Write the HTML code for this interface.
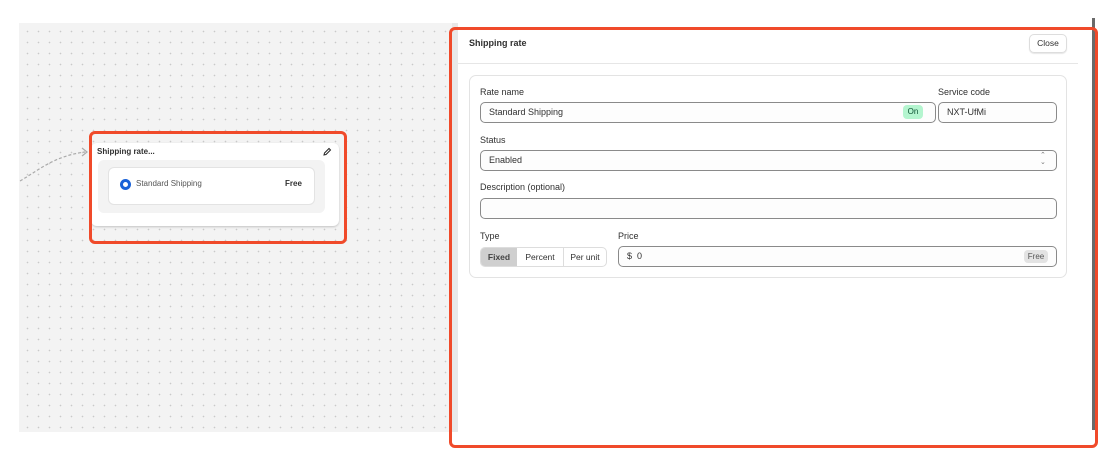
<!DOCTYPE html><html><head><style>
body{margin:0;width:1118px;height:468px;background:#fff;position:relative;overflow:hidden;font-family:"Liberation Sans",sans-serif;color:#303030}
.a{position:absolute;box-sizing:border-box}
.canvas{left:19px;top:23px;width:440px;height:409px;background-color:#f3f3f3;background-image:radial-gradient(#c9c9c9 0.7px,transparent 0.9px);background-size:11px 11px;background-position:3px 3px}
.lbl{font-size:9px;color:#303030}
.inp{border:1px solid #8a8a8a;border-radius:5px;background:#fdfdfd;font-size:9px;padding-left:8px;line-height:18px}
.red{border:3px solid #f04a2a;border-radius:6px}
</style></head><body>
<div class="a canvas"></div>
<svg class="a" style="left:19px;top:140px" width="75" height="50"><path d="M1 41 C20 30,35 16,66 12" stroke="#aaa" stroke-width="1.2" fill="none" stroke-dasharray="3 2"/><path d="M63 8 L68 12 L63 16" stroke="#aaa" stroke-width="1.2" fill="none"/></svg>
<div class="a" style="left:91px;top:143px;width:248px;height:83px;background:#fff;border-radius:6px;box-shadow:0 1px 2px rgba(0,0,0,.2)"></div>
<div class="a" style="left:97px;top:147px;font-size:8px;font-weight:bold">Shipping rate...</div>
<svg class="a" style="left:322px;top:147px" width="10" height="10"><path d="M2 8 L2.5 6 L7 1.5 L8.5 3 L4 7.5 Z" stroke="#222" stroke-width="1" fill="none"/></svg>
<div class="a" style="left:98px;top:160px;width:227px;height:53px;background:#f3f3f3;border-radius:6px"></div>
<div class="a" style="left:108px;top:167px;width:207px;height:38px;background:#fff;border-radius:6px;border:1px solid #e3e3e3"></div>
<div class="a" style="left:120px;top:179px;width:11px;height:11px;border-radius:50%;border:3px solid #1a62d8"></div>
<div class="a" style="left:136px;top:179px;font-size:8px;color:#555">Standard Shipping</div>
<div class="a" style="left:285px;top:179px;font-size:8px;font-weight:bold">Free</div>
<div class="a red" style="left:89px;top:131px;width:258px;height:113px"></div>

<div class="a" style="left:452px;top:23px;width:6px;height:409px;background:#e8e8e8"></div>
<div class="a" style="left:458px;top:23px;width:635px;height:409px;background:#fff"></div>
<div class="a" style="left:1092px;top:18px;width:3px;height:412px;background:#6a6a6a"></div>
<div class="a" style="left:469px;top:38px;font-size:9px;font-weight:bold">Shipping rate</div>
<div class="a" style="left:1029px;top:34px;width:38px;height:19px;border:1px solid #ddd;border-radius:5px;font-size:8.5px;text-align:center;line-height:17px;box-shadow:0 1px 1px rgba(0,0,0,.1)">Close</div>
<div class="a" style="left:458px;top:63px;width:620px;height:1px;background:#e6e6e6"></div>
<div class="a" style="left:469px;top:75px;width:598px;height:203px;border:1px solid #e3e3e3;border-radius:7px"></div>
<div class="a lbl" style="left:480px;top:87px">Rate name</div>
<div class="a lbl" style="left:938px;top:87px">Service code</div>
<div class="a inp" style="left:480px;top:102px;width:456px;height:21px">Standard Shipping</div>
<div class="a" style="left:903px;top:105px;width:20px;height:14px;background:#b4f5cf;border-radius:4px;font-size:8px;color:#0c5132;text-align:center;line-height:14px">On</div>
<div class="a inp" style="left:938px;top:102px;width:119px;height:21px">NXT-UfMi</div>
<div class="a lbl" style="left:480px;top:135px">Status</div>
<div class="a inp" style="left:480px;top:150px;width:577px;height:21px">Enabled</div>
<div class="a" style="left:1040px;top:152px;font-size:7px;color:#777;line-height:7px">⌃<br>⌄</div>
<div class="a lbl" style="left:480px;top:182px">Description (optional)</div>
<div class="a inp" style="left:480px;top:198px;width:577px;height:21px"></div>
<div class="a lbl" style="left:480px;top:231px">Type</div>
<div class="a lbl" style="left:618px;top:231px">Price</div>
<div class="a" style="left:480px;top:247px;width:127px;height:20px;border:1px solid #ddd;border-radius:5px;overflow:hidden;font-size:8.5px;display:flex">
<div style="width:36px;background:#cfcfcf;text-align:center;line-height:18px;font-weight:bold;color:#444">Fixed</div>
<div style="width:46px;text-align:center;line-height:18px;border-right:1px solid #ddd">Percent</div>
<div style="flex:1;text-align:center;line-height:18px">Per unit</div></div>
<div class="a inp" style="left:618px;top:246px;width:439px;height:21px">$&nbsp;&nbsp;0</div>
<div class="a" style="left:1024px;top:250px;width:24px;height:13px;background:#e3e3e3;border-radius:4px;font-size:8px;text-align:center;line-height:13px;color:#555">Free</div>
<div class="a red" style="left:449px;top:27px;width:649px;height:421px"></div>
</body></html>
